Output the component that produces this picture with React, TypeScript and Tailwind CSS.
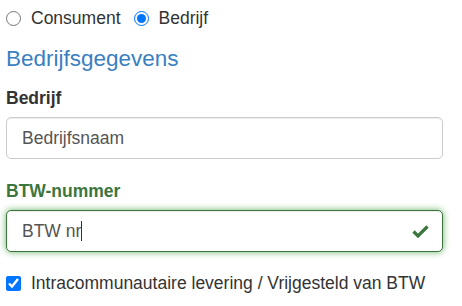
export default function App() {
  return (
    <div
      className="w-[462px] h-[306px] bg-white pl-[6px] pt-[6px] text-[17.5px] text-[#333]"
      style={{ fontFamily: '"Liberation Sans", Arial, sans-serif' }}
    >
      <div className="w-[437px]">
        <div className="flex items-center h-[25px]">
          <input type="radio" name="type" readOnly className="w-[15px] h-[15px] m-0" />
          <span className="ml-[10px] leading-[25px]">Consument</span>
          <input type="radio" name="type" defaultChecked className="w-[15px] h-[15px] m-0 ml-[13px]" />
          <span className="ml-[10px] leading-[25px]">Bedrijf</span>
        </div>

        <h4 className="mt-[16px] text-[22.5px] leading-[1.1] text-[#3a7fbf]">Bedrijfsgegevens</h4>

        <label className="block mt-[14px] font-bold leading-[25px]">Bedrijf</label>
        <div className="mt-[6px] h-[42px] rounded-[5px] border border-[#ccc] bg-white px-[15px] flex items-center text-[#555] shadow-[inset_0_1px_1px_rgba(0,0,0,0.075)]">
          Bedrijfsnaam
        </div>

        <label className="block mt-[20px] font-bold leading-[25px] text-[#3c763d]">BTW-nummer</label>
        <div className="mt-[6px] h-[42px] rounded-[5px] border border-[#3c763d] bg-white px-[15px] flex items-center text-[#555] shadow-[inset_0_1px_1px_rgba(0,0,0,0.075),0_0_7px_#67b168]">
          <span>BTW nr</span>
          <span className="inline-block w-px h-[20px] bg-[#333]" />
          <svg className="ml-auto mr-[-2px]" width="17" height="14" viewBox="0 0 17 14">
            <path d="M1.5 7.5 L6 12 L15.5 2.5" fill="none" stroke="#3c763d" strokeWidth="3.2" />
          </svg>
        </div>

        <div className="flex items-center mt-[19px] h-[25px]">
          <input type="checkbox" defaultChecked className="w-[15px] h-[15px] m-0" />
          <span className="ml-[10px] leading-[25px]">Intracommunautaire levering / Vrijgesteld van BTW</span>
        </div>
      </div>
    </div>
  );
}
